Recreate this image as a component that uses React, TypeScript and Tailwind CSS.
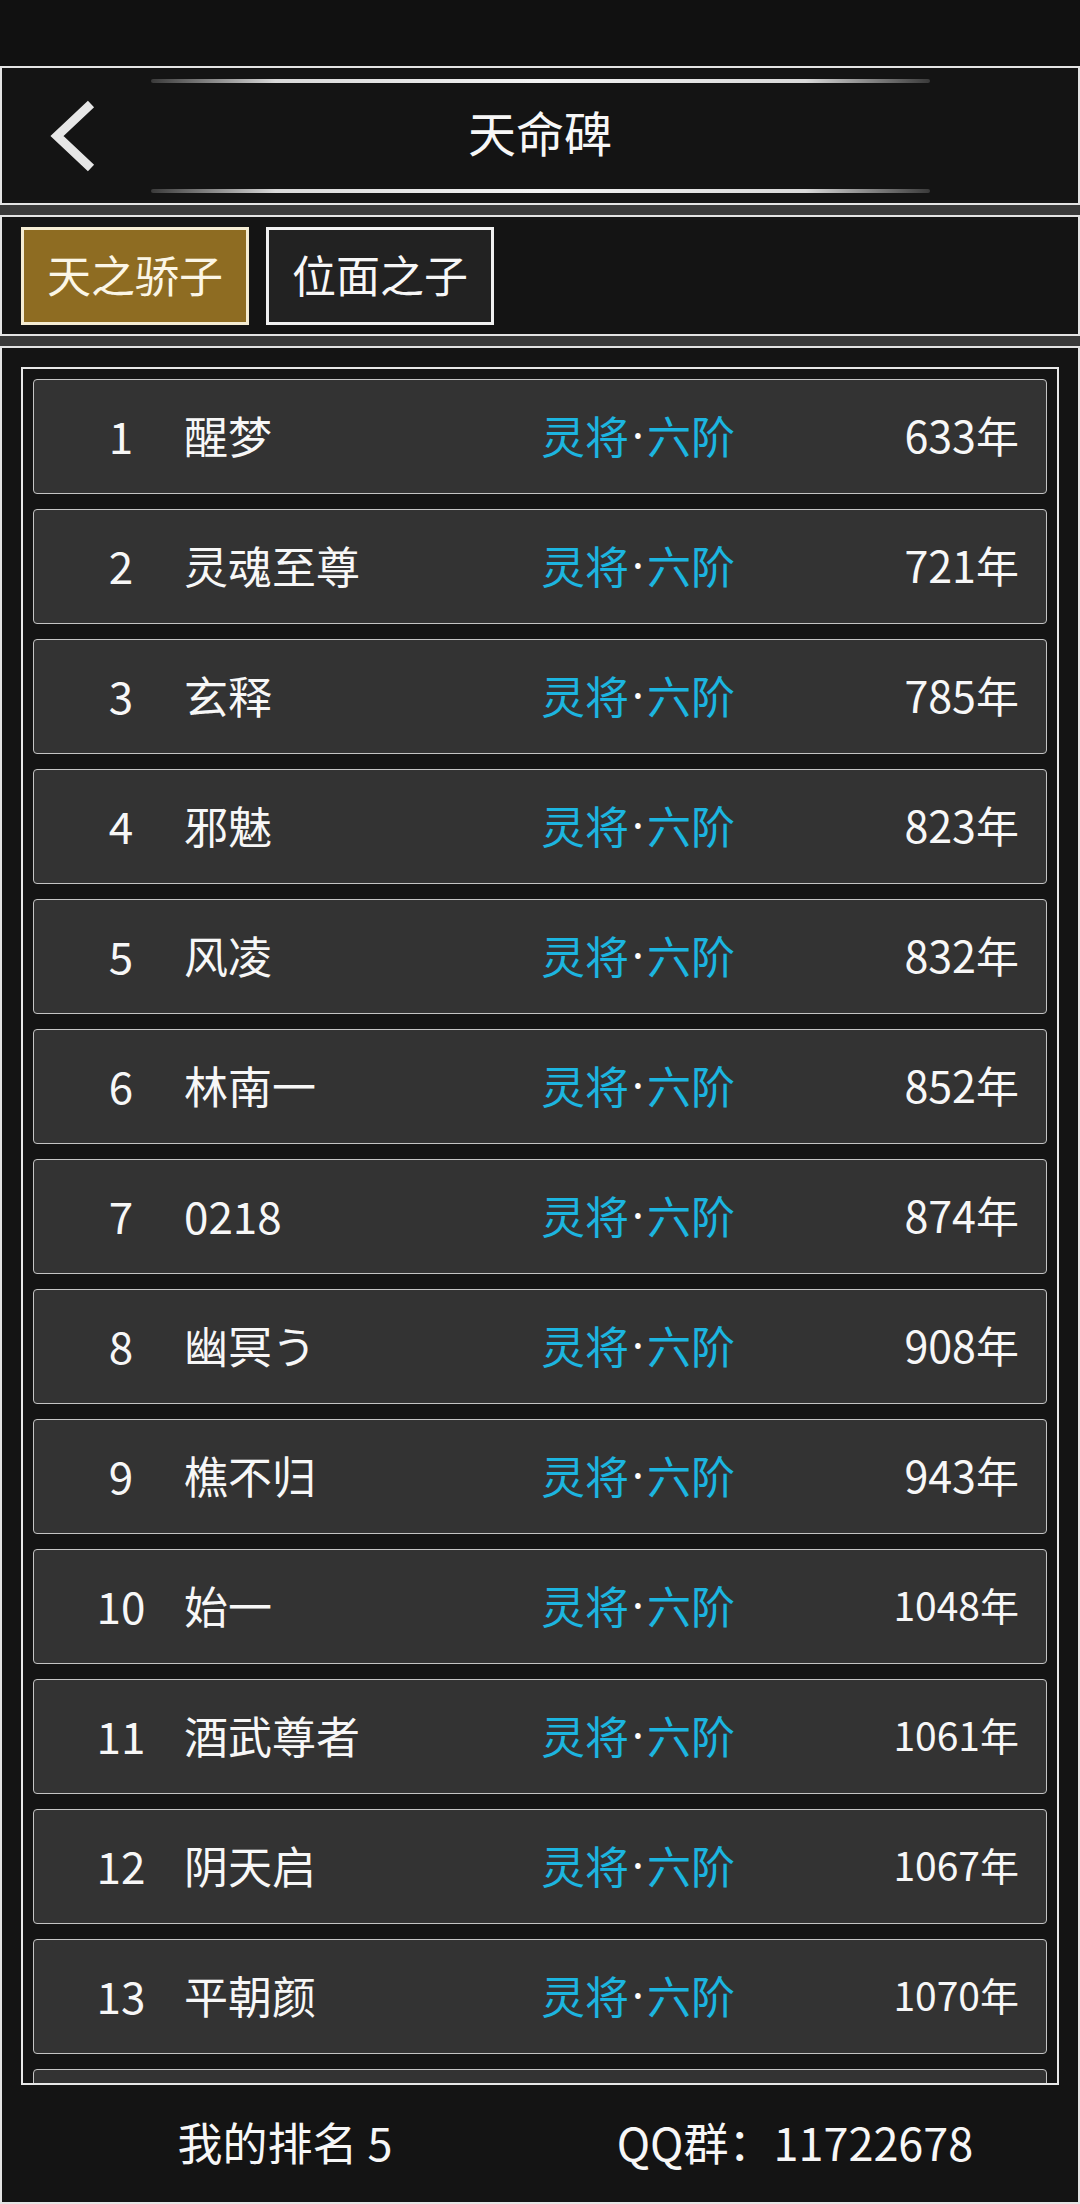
import React from 'react'

const rows = [
    { rank: 1, name: '醒梦', years: 633 },
    { rank: 2, name: '灵魂至尊', years: 721 },
    { rank: 3, name: '玄释', years: 785 },
    { rank: 4, name: '邪魅', years: 823 },
    { rank: 5, name: '风凌', years: 832 },
    { rank: 6, name: '林南一', years: 852 },
    { rank: 7, name: '0218', years: 874 },
    { rank: 8, name: '幽冥う', years: 908 },
    { rank: 9, name: '樵不归', years: 943 },
    { rank: 10, name: '始一', years: 1048 },
    { rank: 11, name: '酒武尊者', years: 1061 },
    { rank: 12, name: '阴天启', years: 1067 },
    { rank: 13, name: '平朝颜', years: 1070 },
]

function GlowLine() {
    return (
        <div className="mx-auto h-[4px] w-[779px] rounded-full bg-[linear-gradient(90deg,#3a3a3a,#d8d8d8_16%,#f2f2f2_50%,#d8d8d8_84%,#3a3a3a)]" />
    )
}

function RankRow({ rank, name, years }: { rank: number; name: string; years: number }) {
    return (
        <div className="flex h-[115px] shrink-0 items-center rounded-[4px] border border-[#c4c4c4] bg-[#333333] pb-[4px] text-[44px] leading-none text-[#f7f7f7]">
            <div className="ml-[47px] w-[80px] text-center">{rank}</div>
            <div className="ml-[23px] w-[357px] whitespace-nowrap">{name}</div>
            <div className="flex items-center whitespace-nowrap text-[#1cb5e0]">
                灵将
                <span className="inline-block w-[18px] text-center font-['Noto_Sans',sans-serif] text-white">·</span>
                六阶
            </div>
            <div className={`ml-auto mr-[27px] whitespace-nowrap ${years >= 1000 ? 'text-[39px]' : 'text-[43px]'}`}>
                {years}年
            </div>
        </div>
    )
}

export default function App() {
    return (
        <div className="flex h-[2204px] flex-col bg-[#111111] font-['Noto_Sans_CJK_SC','Noto_Sans',sans-serif] text-white">
            {/* status bar */}
            <div className="h-[66px] shrink-0 bg-[#111111]" />

            {/* header */}
            <div className="flex h-[139px] shrink-0 flex-col border-2 border-[#e4e4e4] bg-[#141414] pt-[11px]">
                <GlowLine />
                <div className="grid h-[106px] grid-cols-[1fr_auto_1fr] items-center">
                    <div className="pl-[40px]">
                        <svg width="60" height="80" viewBox="0 0 60 80" fill="none">
                            <path d="M49 8 L15 40 L49 72" stroke="#e6e6e6" strokeWidth="9" strokeLinejoin="miter" />
                        </svg>
                    </div>
                    <div className="pb-[10px] text-[48px] leading-none text-[#f7f7f7]">天命碑</div>
                    <div />
                </div>
                <GlowLine />
            </div>

            <div className="h-[10px] shrink-0 bg-[#3a3a3a]" />

            {/* tabs */}
            <div className="flex h-[121px] shrink-0 items-center gap-[17px] border-2 border-[#e4e4e4] bg-[#141414] pl-[19px]">
                <button className="flex h-[98px] w-[228px] items-center justify-center border-[3px] border-[#f4ecd3] bg-[#8e6c22] pb-[4px] text-[44px] leading-none text-[#fbf6e6]">
                    天之骄子
                </button>
                <button className="flex h-[98px] w-[228px] items-center justify-center border-[3px] border-[#f0f0f0] bg-[#222222] pb-[4px] text-[44px] leading-none text-[#f7f7f7]">
                    位面之子
                </button>
            </div>

            <div className="h-[10px] shrink-0 bg-[#3a3a3a]" />

            {/* list + footer */}
            <div className="flex min-h-0 flex-1 flex-col border-2 border-[#e4e4e4] bg-[#141414]">
                <div className="mx-[19px] mt-[19px] flex h-[1718px] shrink-0 flex-col gap-[15px] overflow-hidden border-2 border-[#e8e8e8] p-[10px]">
                    {rows.map((r) => (
                        <RankRow key={r.rank} {...r} />
                    ))}
                    <div className="h-[115px] shrink-0 rounded-[4px] border border-[#c4c4c4] bg-[#333333]" />
                </div>
                <div className="grid flex-1 grid-cols-2 items-center px-[28px] pb-[4px] text-[45px] leading-none text-[#f7f7f7]">
                    <div className="text-center">我的排名 5</div>
                    <div className="text-center">QQ群：11722678</div>
                </div>
            </div>
        </div>
    )
}
